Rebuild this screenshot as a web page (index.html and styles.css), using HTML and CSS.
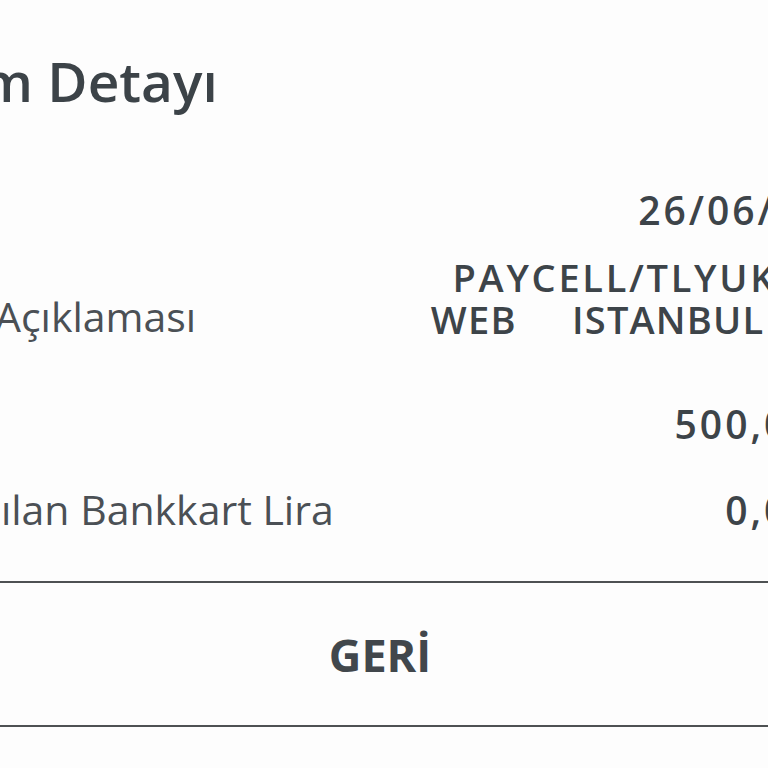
FILE: index.html
```html
<!DOCTYPE html>
<html lang="tr">
<head>
  <meta charset="UTF-8">
  <title>İşlem Detayı</title>
  <meta name="viewport" content="width=device-width, initial-scale=1.0">
  <link rel="stylesheet" href="styles.css">
</head>
<body>
  <div class="page">
    <div class="sheet">
      <h1 class="title">İşlem Detayı</h1>

      <!-- işlem bilgileri -->
      <div class="row">
        <span class="label">Tarih</span>
        <span class="value">26/06/2023</span>
      </div>
      <div class="row row-desc">
        <span class="label">İşlem Açıklaması</span>
        <span class="value value-multi"><span class="line-wide">PAYCELL/TLYUKLEME</span>
WEB     ISTANBUL       TR</span>
      </div>
      <div class="row">
        <span class="label">Tutar</span>
        <span class="value">500,00 TL</span>
      </div>
      <div class="row">
        <span class="label">Kullanılan Bankkart Lira</span>
        <span class="value">0,00 TL</span>
      </div>
    </div>

    <!-- geri butonu -->
    <div class="footer">
      <button class="back-btn">GERİ</button>
    </div>
  </div>
</body>
</html>
```

FILE: styles.css
```css
/* genel */
body {
  margin: 0;
  padding: 0;
  background: #fdfdfd;
  font-family: 'Open Sans', 'Lato', sans-serif;
  color: #3d4449;
}

.page {
  width: 768px;
  height: 768px;
  overflow: hidden;
}

/* içerik ekranın iki yanından taşıyor */
.sheet {
  margin-left: -118px;
  width: 995px;
}

.title {
  margin: 47px 0 51px;
  padding-left: 8px;
  font-size: 55px;
  line-height: 68px;
  font-weight: 600;
  color: #3c4348;
}

/* satırlar */
.row {
  display: flex;
  justify-content: space-between;
  align-items: center;
  height: 86px;
}

.row-desc {
  height: 128px;
}

.label {
  font-size: 41px;
  line-height: 50px;
  font-weight: 400;
  color: #4b5055;
  white-space: nowrap;
}

.value {
  font-size: 39px;
  line-height: 47px;
  font-weight: 600;
  letter-spacing: 3px;
  text-align: right;
  white-space: nowrap;
}

.value-multi {
  align-self: flex-start;
  margin-right: -13px;
  padding-top: 4px;
  font-size: 38px;
  line-height: 42px;
  letter-spacing: 1.2px;
  white-space: pre;
}

.line-wide {
  padding-right: 4px;
  letter-spacing: 2.7px;
}

/* alt buton */
.footer {
  margin-top: 29px;
  border-top: 2px solid #4e5153;
  border-bottom: 2px solid #4e5153;
  height: 142px;
  display: flex;
  align-items: center;
  justify-content: center;
  padding-right: 8px;
}

.back-btn {
  background: none;
  border: none;
  padding: 0;
  font-family: 'Open Sans', 'Lato', sans-serif;
  font-size: 45px;
  font-weight: 700;
  color: #41474c;
  cursor: pointer;
}
```
